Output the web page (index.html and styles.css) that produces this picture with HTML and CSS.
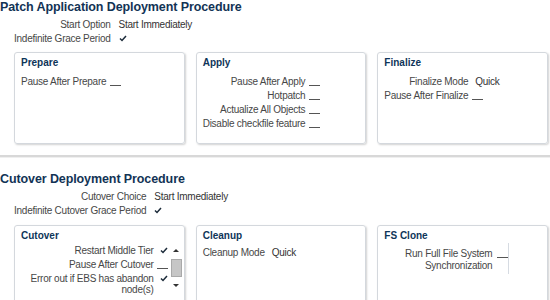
FILE: index.html
```html
<!DOCTYPE html>
<html>
<head>
<meta charset='utf-8'/>
<link rel="stylesheet" href="styles.css">
</head>
<body>
<div class='page'>

<h1 class='title'>Patch Application Deployment Procedure</h1>
<div class='props'>
<span class='lbl'>Start Option</span><span class='val'>Start Immediately</span>
<span class='lbl'>Indefinite Grace Period</span><span class='val'><svg class='check' width='8' height='7' viewBox='0 0 8 7'><path d='M1 3.5 L3 5.5 L7 1' fill='none' stroke='#1c2b3a' stroke-width='1.5'/></svg></span>
</div>

<div class='cards cards-top'>
<div class='card'>
<h2>Prepare</h2>
<div class='form'>
<span class='lbl'>Pause After Prepare</span><span class='val'><i class='dash'></i></span>
</div>
</div>
<div class='card'>
<h2>Apply</h2>
<div class='form'>
<span class='lbl'>Pause After Apply</span><span class='val'><i class='dash'></i></span>
<span class='lbl'>Hotpatch</span><span class='val'><i class='dash'></i></span>
<span class='lbl'>Actualize All Objects</span><span class='val'><i class='dash'></i></span>
<span class='lbl'>Disable checkfile feature</span><span class='val'><i class='dash'></i></span>
</div>
</div>
<div class='card'>
<h2>Finalize</h2>
<div class='form'>
<span class='lbl'>Finalize Mode</span><span class='val'>Quick</span>
<span class='lbl'>Pause After Finalize</span><span class='val'><i class='dash'></i></span>
</div>
</div>
</div>

<div class='sep'></div>

<h1 class='title title-cutover'>Cutover Deployment Procedure</h1>
<div class='props'>
<span class='lbl'>Cutover Choice</span><span class='val'>Start Immediately</span>
<span class='lbl'>Indefinite Cutover Grace Period</span><span class='val'><svg class='check' width='8' height='7' viewBox='0 0 8 7'><path d='M1 3.5 L3 5.5 L7 1' fill='none' stroke='#1c2b3a' stroke-width='1.5'/></svg></span>
</div>

<div class='cards cards-bottom'>
<div class='card'>
<h2>Cutover</h2>
<div class='scroll'>
<div class='form form-cutover'>
<span class='lbl'>Restart Middle Tier</span><span class='val'><svg class='check' width='8' height='7' viewBox='0 0 8 7'><path d='M1 3.5 L3 5.5 L7 1' fill='none' stroke='#1c2b3a' stroke-width='1.5'/></svg></span>
<span class='lbl'>Pause After Cutover</span><span class='val'><i class='dash'></i></span>
<span class='lbl'>Error out if EBS has abandon node(s)</span><span class='val'><svg class='check' width='8' height='7' viewBox='0 0 8 7'><path d='M1 3.5 L3 5.5 L7 1' fill='none' stroke='#1c2b3a' stroke-width='1.5'/></svg></span>
</div>
<div class='scrollbar'>
<span class='arrow arrow-up'></span>
<span class='thumb'></span>
<span class='arrow arrow-down'></span>
</div>
</div>
</div>
<div class='card'>
<h2>Cleanup</h2>
<div class='form form-cleanup'>
<span class='lbl'>Cleanup Mode</span><span class='val'>Quick</span>
</div>
</div>
<div class='card'>
<h2>FS Clone</h2>
<div class='form form-fsclone'>
<span class='lbl'>Run Full File System Synchronization</span><span class='val'><i class='dash'></i></span>
</div>
</div>
</div>

</div>
</body>
</html>
```

FILE: styles.css
```css
body {
    margin: 0;
    background: #fff;
    font-family: "Liberation Sans", Arial, sans-serif;
    font-size: 10px;
    letter-spacing: -0.25px;
    color: #3c3c3c;
}
.page {
    width: 550px;
    height: 300px;
    overflow: hidden;
}
h1.title {
    margin: -1px 0 0 0;
    font-size: 12.5px;
    letter-spacing: -0.1px;
    line-height: 16px;
    font-weight: bold;
    color: #123355;
}
h1.title-cutover {
    margin-top: 13px;
}
div.props {
    display: grid;
    grid-template-columns: auto auto;
    justify-content: start;
    column-gap: 8px;
    margin-left: 14px;
    margin-top: 3px;
    line-height: 14px;
}
.lbl {
    text-align: right;
    color: #474747;
}
.val {
    color: #333;
}
svg.check {
    vertical-align: 0;
}
i.dash {
    display: inline-block;
    width: 11px;
    height: 1px;
    margin-left: -3px;
    background: #555;
    vertical-align: -1px;
}
div.cards {
    display: grid;
    grid-template-columns: 1fr 1fr 1fr;
    column-gap: 11px;
    margin: 0 2px 0 14px;
}
div.cards-top {
    margin-top: 6px;
    height: 92px;
}
div.cards-bottom {
    margin-top: 7px;
    height: 82px;
}
div.card {
    border: 1px solid #d4d8dd;
    border-radius: 3px;
    box-shadow: 1px 1px 2px rgba(0, 0, 0, 0.18);
    padding: 3px 6px;
}
div.card h2 {
    margin: 0 0 5px 0;
    font-size: 10px;
    letter-spacing: 0;
    line-height: 14px;
    font-weight: bold;
    color: #0e3559;
}
div.form {
    display: grid;
    grid-template-columns: auto auto;
    justify-content: start;
    column-gap: 7px;
    line-height: 14px;
}
div.form-cleanup {
    margin-top: -2px;
}
div.form-fsclone {
    padding-left: 20px;
    line-height: 12px;
    column-gap: 8px;
}
div.form-fsclone .lbl {
    width: 88px;
}
div.form-fsclone .val {
    border-right: 1px solid #d6dbe2;
    height: 26px;
    margin-top: -5px;
    padding-top: 5px;
}
div.sep {
    margin-top: 11px;
    border-top: 2px solid #d8d8d8;
    border-bottom: 1px solid #efefef;
}
div.scroll {
    display: flex;
    justify-content: flex-end;
    margin-top: -5px;
    margin-right: -5px;
}
div.form-cutover {
    grid-template-columns: 124px 10px;
    column-gap: 6px;
    line-height: 11px;
    row-gap: 3px;
    padding-top: 2px;
}
div.scrollbar {
    width: 13px;
    height: 46px;
    margin-top: 2px;
    display: flex;
    flex-direction: column;
    align-items: center;
    justify-content: space-between;
}
span.arrow {
    width: 0;
    height: 0;
    border-left: 3px solid transparent;
    border-right: 3px solid transparent;
    margin: 4px 0;
}
span.arrow-up {
    border-bottom: 3px solid #333;
}
span.arrow-down {
    border-top: 3px solid #333;
}
span.thumb {
    width: 11px;
    height: 18px;
    background: #c6c6c6;
    border: 1px solid #a9a9a9;
    box-sizing: border-box;
}
```
